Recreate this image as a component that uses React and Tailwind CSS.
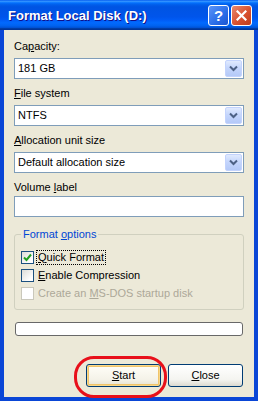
import React from "react";

function Chevron() {
  return (
    <svg width="9" height="7" viewBox="0 0 9 7">
      <polyline points="1,1.5 4.5,5 8,1.5" fill="none" stroke="#4d6185" strokeWidth="2" />
    </svg>
  );
}

function Combo({ value }) {
  return (
    <div className="h-[21px] w-full border border-[#7f9db9] bg-white flex items-center">
      <span className="flex-1 pl-[3px] leading-[13px]">{value}</span>
      <div className="w-[17px] h-[17px] mr-[1px] rounded-[2px] border border-[#c3d3fd] bg-[linear-gradient(to_bottom,#e0eafe_0%,#c5d6fc_45%,#b4c9f8_100%)] flex items-center justify-center">
        <Chevron />
      </div>
    </div>
  );
}

function Check({ checked, disabled }) {
  return (
    <div
      className={
        "w-[13px] h-[13px] border flex items-center justify-center " +
        (disabled
          ? "border-[#cac8bb] bg-white"
          : "border-[#1c5180] bg-[linear-gradient(135deg,#dcdcd7_0%,#ffffff_80%)]")
      }
    >
      {checked && (
        <svg width="9" height="9" viewBox="0 0 9 9">
          <polyline points="1,4.5 3.5,7 8,1.5" fill="none" stroke="#21a121" strokeWidth="2" />
        </svg>
      )}
    </div>
  );
}

function XPButton({ children, def }) {
  return (
    <div
      className={
        "w-[75px] h-[23px] rounded-[3px] border border-[#003c74] flex items-center justify-center " +
        (def
          ? "bg-[linear-gradient(to_bottom,#fffef8_0%,#f4f2e8_70%,#e6e2cf_100%)] shadow-[inset_0_0_0_1px_#f8d78a,inset_0_0_0_2px_#f0c46a]"
          : "bg-[linear-gradient(to_bottom,#ffffff_0%,#f4f4f0_70%,#dcdad0_100%)]")
      }
    >
      {children}
    </div>
  );
}

export default function App() {
  return (
    <div className="w-[258px] h-[401px] bg-[#0a46d6] flex flex-col relative text-[11px] leading-[13px] text-black font-['Liberation_Sans',Arial,sans-serif]">
      {/* title bar */}
      <div className="h-[30px] flex items-center pl-[8px] pr-[6px] bg-[linear-gradient(to_bottom,#0058ee_0%,#3593ff_4%,#288eff_6%,#127dff_8%,#036ffc_10%,#0262ee_14%,#0057e5_20%,#0054e3_24%,#0055eb_56%,#005bf5_66%,#026afe_76%,#0062ef_86%,#0052d6_92%,#0040ab_94%,#003092_100%)]">
        <span className="flex-1 text-white font-bold text-[13px] leading-[15px] [text-shadow:1px_1px_#0f1089] font-['Liberation_Sans',sans-serif]">
          Format Local Disk (D:)
        </span>
        <div className="flex gap-[2px]">
          <div className="w-[21px] h-[21px] rounded-[3px] border border-white bg-[linear-gradient(135deg,#5b94f8_0%,#2a6de8_60%,#1c55d0_100%)] flex items-center justify-center text-white font-bold text-[15px] leading-none font-['Liberation_Sans',sans-serif]">
            ?
          </div>
          <div className="w-[21px] h-[21px] rounded-[3px] border border-white bg-[linear-gradient(135deg,#e8896f_0%,#d9512f_55%,#c13d1c_100%)] flex items-center justify-center">
            <svg width="11" height="11" viewBox="0 0 11 11">
              <path d="M1.5 1.5 L9.5 9.5 M9.5 1.5 L1.5 9.5" stroke="white" strokeWidth="2.2" strokeLinecap="square" />
            </svg>
          </div>
        </div>
      </div>

      {/* client */}
      <div className="flex-1 mx-[4px] mb-[4px] bg-[#ece9d8] px-[10px] pt-[10px] flex flex-col">
        <div>
          Ca<u>p</u>acity:
        </div>
        <div className="mt-[5px]">
          <Combo value="181 GB" />
        </div>
        <div className="mt-[8px]">
          <u>F</u>ile system
        </div>
        <div className="mt-[5px]">
          <Combo value="NTFS" />
        </div>
        <div className="mt-[8px]">
          <u>A</u>llocation unit size
        </div>
        <div className="mt-[5px]">
          <Combo value="Default allocation size" />
        </div>
        <div className="mt-[8px]">
          Volume <u>l</u>abel
        </div>
        <div className="mt-[2px] h-[21px] border border-[#7f9db9] bg-white" />

        <fieldset className="mt-[11px] border border-[#d0d0bf] rounded-[3px] px-[6px] pb-[7px]">
          <legend className="px-[2px] text-[#0046d5]">
            Format <u>o</u>ptions
          </legend>
          <div className="pt-[7px] flex flex-col">
            <div className="h-[18px] flex items-center gap-[3px]">
              <Check checked />
              <span className="outline outline-1 outline-dotted outline-black px-[1px]">
                <u>Q</u>uick Format
              </span>
            </div>
            <div className="h-[18px] flex items-center gap-[4px]">
              <Check />
              <span>
                <u>E</u>nable Compression
              </span>
            </div>
            <div className="h-[18px] flex items-center gap-[4px] text-[#aca899]">
              <Check disabled />
              <span>
                Create an <u>M</u>S-DOS startup disk
              </span>
            </div>
          </div>
        </fieldset>

        <div className="mt-[12px] h-[14px] mx-[1px] rounded-[3px] border border-[#686868] bg-white" />

        <div className="mt-[28px] flex justify-end gap-[7px] pr-[1px]">
          <XPButton def>
            <span>
              <u>S</u>tart
            </span>
          </XPButton>
          <XPButton>
            <span>
              <u>C</u>lose
            </span>
          </XPButton>
        </div>
      </div>

      {/* red highlight ring */}
      <div className="absolute left-[74px] top-[356px] w-[93px] h-[42px] rounded-[20px] border-[3px] border-[#e8101a] pointer-events-none" />
    </div>
  );
}
